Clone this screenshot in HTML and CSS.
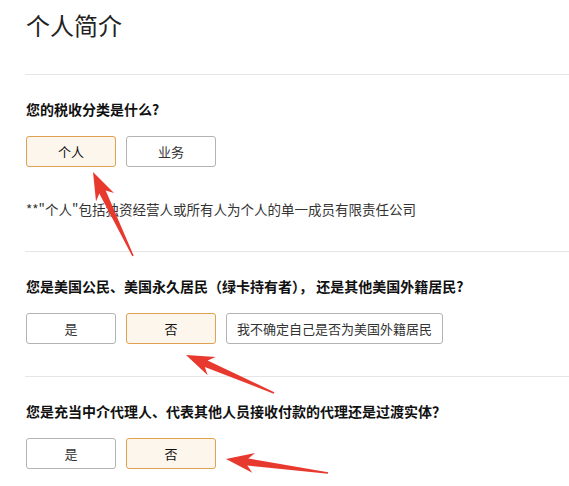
FILE: index.html
```html
<!DOCTYPE html>
<html lang="zh-CN">
<head>
<meta charset="utf-8">
<title>个人简介</title>
<link rel="stylesheet" href="styles.css">
</head>
<body>
<div class="page">
  <h1 class="title">个人简介</h1>

  <section class="block">
    <p class="question">您的税收分类是什么?</p>
    <div class="options">
      <button class="opt selected">个人</button>
      <button class="opt">业务</button>
    </div>
    <p class="note">**"个人"包括独资经营人或所有人为个人的单一成员有限责任公司</p>
  </section>

  <section class="block">
    <p class="question">您是美国公民、美国永久居民（绿卡持有者）， 还是其他美国外籍居民?</p>
    <div class="options">
      <button class="opt">是</button>
      <button class="opt selected">否</button>
      <button class="opt wide">我不确定自己是否为美国外籍居民</button>
    </div>
  </section>

  <section class="block last">
    <p class="question">您是充当中介代理人、代表其他人员接收付款的代理还是过渡实体？</p>
    <div class="options">
      <button class="opt">是</button>
      <button class="opt selected">否</button>
    </div>
  </section>

  <svg class="arrows" width="569" height="486" viewBox="0 0 569 486" aria-hidden="true">
    <polygon points="133.7,255.7 105.7,190.4 114.0,193.0 93,172 96.0,201.6 99.3,193.4 132.3,256.3"/>
    <polygon points="274.3,392.3 207.6,360.5 215.7,356.9 186,355 207.7,375.3 204.8,366.9 273.7,393.7"/>
    <polygon points="328.1,472.2 248.3,458.5 255.1,452.9 226,459 252.3,472.7 247.3,465.5 327.9,473.8"/>
  </svg>
</div>
</body>
</html>
```

FILE: styles.css
```css
html, body {
  margin: 0;
  padding: 0;
  background: #ffffff;
}

body {
  font-family: "Noto Sans CJK SC", "Noto Sans", "Liberation Sans", sans-serif;
  color: #222;
}

.page {
  position: relative;
  width: 569px;
  height: 486px;
  overflow: hidden;
  padding-left: 25px;
  box-sizing: border-box;
}

.title {
  margin: 0;
  padding-top: 7px;
  padding-left: 1px;
  font-size: 24px;
  line-height: 36px;
  font-weight: 400;
  color: #222;
  height: 74px;
  box-sizing: border-box;
}

.block {
  border-top: 1px solid #e6e6e6;
  padding: 24px 0 32px 1px;
}

.block.last {
  padding-bottom: 20px;
}

.question {
  margin: 0;
  font-size: 14px;
  line-height: 20px;
  font-weight: 700;
  color: #111;
}

.options {
  display: flex;
  gap: 10px;
  margin-top: 17px;
}

.opt {
  width: 90px;
  height: 31px;
  padding: 0;
  box-sizing: border-box;
  border: 1px solid #b3b3b3;
  border-radius: 3px;
  background: #fff;
  font-family: inherit;
  font-size: 13px;
  color: #333;
  cursor: pointer;
}

.opt.selected {
  border-color: #e0a152;
  background: #fdf6ec;
  color: #111;
}

.opt.wide {
  width: auto;
  padding: 0 10px;
}

.note {
  margin: 32px 0 0;
  font-size: 13.5px;
  line-height: 20px;
  color: #333;
}

.arrows {
  position: absolute;
  left: 0;
  top: 0;
  pointer-events: none;
}

.arrows polygon {
  fill: #e8392f;
}
```
